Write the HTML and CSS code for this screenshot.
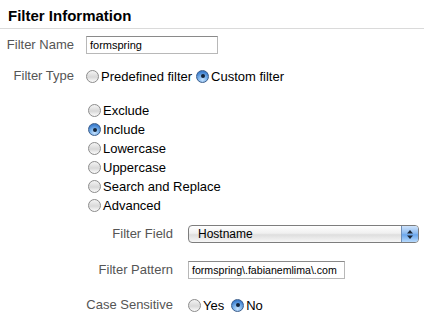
FILE: index.html
```html
<!DOCTYPE html>
<html>
<head>
<meta charset="utf-8">
<link rel="stylesheet" href="styles.css">
</head>
<body>
<h2 class="title">Filter Information</h2>
<div class="row row-name">
  <span class="lbl">Filter Name</span>
  <span class="text text-name">formspring</span>
</div>
<div class="row row-type">
  <span class="lbl">Filter Type</span>
  <span class="opt"><span class="radio"></span>Predefined filter</span>
  <span class="opt opt-gap"><span class="radio on"></span>Custom filter</span>
</div>
<div class="list">
  <span class="opt"><span class="radio"></span>Exclude</span>
  <span class="opt"><span class="radio on"></span>Include</span>
  <span class="opt"><span class="radio"></span>Lowercase</span>
  <span class="opt"><span class="radio"></span>Uppercase</span>
  <span class="opt"><span class="radio"></span>Search and Replace</span>
  <span class="opt"><span class="radio"></span>Advanced</span>
</div>
<div class="row sub row-field">
  <span class="lbl lbl-wide">Filter Field</span>
  <span class="select">
    <span class="select-text">Hostname</span>
    <span class="select-btn">
      <svg width="8" height="11" viewBox="0 0 8 11"><path d="M4 1 L7 4.5 L1 4.5 Z" fill="#1a2533"/><path d="M4 10 L7 6.5 L1 6.5 Z" fill="#1a2533"/></svg>
    </span>
  </span>
</div>
<div class="row sub row-pattern">
  <span class="lbl lbl-wide">Filter Pattern</span>
  <span class="text text-pattern">formspring\.fabianemlima\.com</span>
</div>
<div class="row sub row-case">
  <span class="lbl lbl-wide">Case Sensitive</span>
  <span class="opt"><span class="radio"></span>Yes</span>
  <span class="opt opt-gap2"><span class="radio on"></span>No</span>
</div>
</body>
</html>
```
FILE: styles.css
```css
* { box-sizing: border-box; }
body {
  margin: 0;
  background: #fff;
  font-family: "Liberation Sans", Arial, Helvetica, sans-serif;
  font-size: 13px;
  color: #000;
}
.title {
  margin: 0;
  padding: 6px 0 2px 8px;
  font-size: 15px;
  line-height: 20px;
  font-weight: bold;
  color: #000;
  border-bottom: 1px solid #dadada;
}
.row {
  display: flex;
  align-items: center;
  height: 18px;
}
.lbl {
  width: 74px;
  margin-right: 12px;
  text-align: right;
  color: #555;
  white-space: nowrap;
  line-height: 18px;
}
.lbl-wide {
  width: 173px;
  margin-right: 15px;
}
.row-name { margin-top: 7px; }
.row-type { margin-top: 13px; }
.text {
  display: flex;
  align-items: center;
  height: 18px;
  padding-left: 3px;
  font-size: 11px;
  border: 1px solid #b8b8b8;
  border-top-color: #8a8a8a;
  background: #fff;
  color: #000;
  white-space: nowrap;
  overflow: hidden;
}
.text-name { width: 132px; }
.text-pattern { width: 157px; padding-left: 3px; font-size: 10.6px; }
.opt {
  display: flex;
  align-items: center;
  height: 19px;
  white-space: nowrap;
  color: #000;
}
.opt-gap { margin-left: 4px; }
.opt-gap2 { margin-left: 7px; }
.radio {
  position: relative;
  width: 13px;
  height: 13px;
  margin-right: 2px;
  border-radius: 50%;
  border: 1px solid #8c8c8c;
  background: linear-gradient(#f4f4f4, #d8d8d8 55%, #fcfcfc);
  flex: none;
}
.radio.on {
  border-color: #3b5e8c;
  background: radial-gradient(circle at 50% 80%, #c6e2ff 0, #7db3ea 40%, #3d7fd0 75%, #3a6fb4 100%);
}
.radio.on::after {
  content: "";
  position: absolute;
  left: 3.5px;
  top: 3.5px;
  width: 4px;
  height: 4px;
  border-radius: 50%;
  background: #13243a;
}
.list {
  margin-top: 16px;
  padding-left: 88px;
  display: flex;
  flex-direction: column;
  align-items: flex-start;
}
.row-field { margin-top: 10px; }
.row-pattern { margin-top: 18px; }
.row-case { margin-top: 17px; }
.select {
  display: flex;
  align-items: stretch;
  width: 231px;
  height: 18px;
  border: 1px solid #7d7d7d;
  border-radius: 4px;
  overflow: hidden;
  background: linear-gradient(#ffffff, #f0f0f0 45%, #dedede 55%, #f7f7f7);
}
.select-text {
  flex: 1;
  display: flex;
  align-items: center;
  padding-left: 9px;
  font-size: 12px;
  color: #000;
}
.select-btn {
  width: 17px;
  display: flex;
  align-items: center;
  justify-content: center;
  border-left: 1px solid #6f8fb8;
  background: linear-gradient(#cfe3fb, #8dbbf0 45%, #6aa6ec 55%, #b7dafd);
}
```
